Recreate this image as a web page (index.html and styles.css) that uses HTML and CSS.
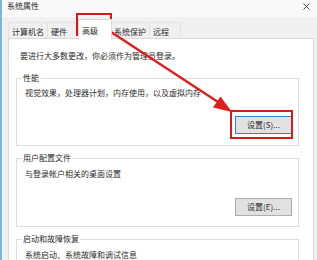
FILE: index.html
```html
<!DOCTYPE html>
<html lang="zh-CN">
<head>
    <meta charset="UTF-8">
    <title>系统属性</title>
    <link rel="stylesheet" href="styles.css">
</head>
<body>

    <div class="window">
        <!-- Title bar -->
        <div class="titlebar">
            <span class="title">系统属性</span>
            <svg class="close" width="7" height="7" viewBox="0 0 7 7">
                <path d="M0.5 0.5 L6.5 6.5 M6.5 0.5 L0.5 6.5" stroke="#333" stroke-width="0.9" fill="none"/>
            </svg>
        </div>

        <!-- Tabs -->
        <div class="tabs">
            <div class="tab tab-name">计算机名</div>
            <div class="tab tab-hw">硬件</div>
            <div class="tab tab-adv active">高级</div>
            <div class="tab tab-prot">系统保护</div>
            <div class="tab tab-remote">远程</div>
        </div>

        <!-- Tab page -->
        <div class="panel">
            <p class="intro">要进行大多数更改，你必须作为管理员登录。</p>

            <fieldset class="group">
                <legend>性能</legend>
                <p class="desc">视觉效果，处理器计划，内存使用，以及虚拟内存</p>
                <div class="btn-row">
                    <button class="btn default">设置(S)...</button>
                </div>
            </fieldset>

            <fieldset class="group">
                <legend>用户配置文件</legend>
                <p class="desc">与登录帐户相关的桌面设置</p>
                <div class="btn-row">
                    <button class="btn">设置(E)...</button>
                </div>
            </fieldset>

            <fieldset class="group">
                <legend>启动和故障恢复</legend>
                <p class="desc">系统启动、系统故障和调试信息</p>
            </fieldset>
        </div>
    </div>

    <!-- Annotation: red boxes and arrow -->
    <svg class="annotation" width="317" height="260" viewBox="0 0 317 260">
        <rect x="77" y="14" width="34" height="21" fill="none" stroke="#d61a1a" stroke-width="2"/>
        <rect x="231" y="111" width="61" height="27" fill="none" stroke="#d61a1a" stroke-width="2"/>
        <line x1="111" y1="32" x2="218" y2="102" stroke="#e01e1e" stroke-width="2.4"/>
        <polygon points="232,112 213,107.5 220.5,96.5" fill="#e01e1e"/>
    </svg>

</body>
</html>
```

FILE: styles.css
```css
* {
    margin: 0;
    padding: 0;
    box-sizing: border-box;
}
body {
    width: 317px;
    height: 260px;
    overflow: hidden;
    background: #f0f0f0;
    font-family: "Noto Sans CJK SC", "Noto Sans", sans-serif;
    font-size: 8px;
    line-height: 12px;
    color: #2a2a2a;
    position: relative;
}
.window {
    height: 260px;
    border-left: 2px solid #7ab6e0;
}
.titlebar {
    height: 17px;
    display: flex;
    justify-content: space-between;
    align-items: flex-start;
    padding: 0 7px 0 5px;
    background: #f9f9f9;
}
.close {
    margin-top: 3px;
}

/* tabs */
.tabs {
    height: 21px;
    display: flex;
    align-items: flex-end;
    padding-left: 6px;
}
.tab {
    height: 16px;
    padding: 3px 0 0 3px;
    border: 1px solid #e2e2e2;
    border-bottom: none;
    background: #f0f0f0;
    white-space: nowrap;
}
.tab + .tab { border-left: none; }
.tab-name { width: 40px; }
.tab-hw { width: 32px; }
.tab-adv { width: 34px; }
.tab-prot { width: 40px; padding-left: 4px; }
.tab-remote { width: 31px; }
.tab.active {
    height: 20px;
    padding-top: 5px;
    margin: 0 -2px -1px -2px;
    border-color: #d9d9d9;
    border-left: 1px solid #d9d9d9;
    background: #fff;
    position: relative;
    z-index: 1;
}

/* tab page */
.panel {
    height: 230px;
    margin: 0 3px 0 6px;
    padding-top: 11px;
    background: #fff;
    border: 1px solid #d9d9d9;
    border-bottom: none;
}
.intro { padding-left: 11px; }

.group {
    margin: 6px 14px 0 7px;
    border: 1px solid #dcdcdc;
    padding: 0 0 10px 0;
    min-inline-size: 0;
}
.group:first-of-type {
    margin-top: 10px;
    padding-bottom: 11px;
}
.group legend {
    margin-left: 5px;
    padding: 0 1px;
    line-height: 12px;
}
.desc {
    padding: 4px 0 0 8px;
}
.group:first-of-type .desc { padding-top: 3px; }

.btn-row {
    display: flex;
    justify-content: flex-end;
    padding-right: 6px;
    margin-top: 18px;
}
.group:first-of-type .btn-row { margin-top: 17px; }
.btn {
    width: 57px;
    height: 18px;
    background: #e1e1e1;
    border: 1px solid #adadad;
    font-family: inherit;
    font-size: 8px;
    line-height: 12px;
    color: #2a2a2a;
}
.btn.default {
    border-color: #2a84d6;
}

.annotation {
    position: absolute;
    left: 0;
    top: 0;
    pointer-events: none;
}
```
